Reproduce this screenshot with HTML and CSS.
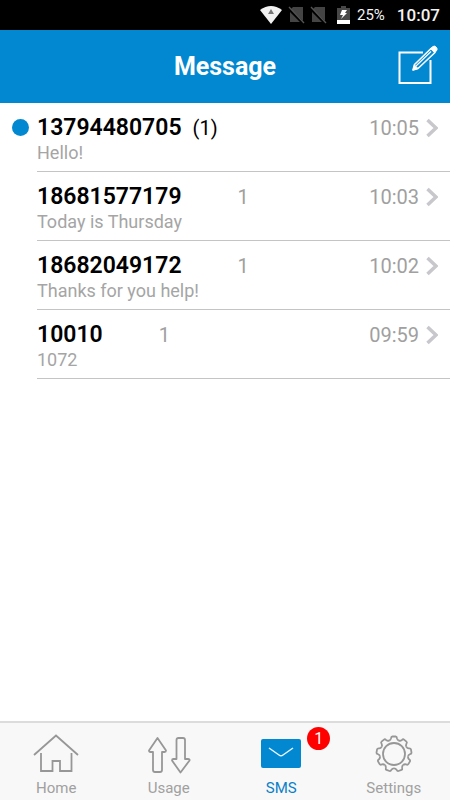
FILE: index.html
```html
<!DOCTYPE html>
<html lang="en">
<head>
<meta charset="utf-8">
<meta name="viewport" content="width=device-width, initial-scale=1">
<title>Message</title>
<link rel="stylesheet" href="styles.css">
</head>
<body>
<div class="status">
  <svg class="wifi" width="22" height="18" viewBox="0 0 22 18" aria-hidden="true"><path d="M0 4Q11-4 22 4L11 18Z" fill="#f2f2f2"/><path d="M11 3L14 8H8Z" fill="#777"/></svg>
  <svg class="sim" width="17" height="18" viewBox="0 0 17 18" aria-hidden="true"><path d="M5 1H15V16H2V4Z" fill="#444"/><path d="M0 2L15 17" stroke="#000" stroke-width="3"/><path d="M1 1L16 17" stroke="#555" stroke-width="1.3"/></svg>
  <svg class="sim" width="17" height="18" viewBox="0 0 17 18" aria-hidden="true"><path d="M5 1H15V16H2V4Z" fill="#444"/><path d="M0 2L15 17" stroke="#000" stroke-width="3"/><path d="M1 1L16 17" stroke="#555" stroke-width="1.3"/></svg>
  <svg class="battery" width="13" height="18" viewBox="0 0 13 18" aria-hidden="true"><path d="M4 0H9V2H13V14H0V2H4Z" fill="#484848"/><path d="M0 14H13V18H0Z" fill="#fff"/><path d="M5 4H10L8 7H10L4 13L6 9H3Z" fill="#fff"/></svg>
  <span class="charge">25%</span>
  <span class="clock">10:07</span>
</div>
<header class="header">
  <h1 class="title">Message</h1>
  <button class="compose" type="button" aria-label="New message">
    <svg width="42" height="42" viewBox="0 0 42 42" fill="none" stroke="#fff" aria-hidden="true">
      <path d="M27 8.500H3.500V39H34.500V16" stroke-width="2"/>
      <path d="M17 26L18.500 20.500L35 4.500L39 8.500L22 24.500Z" fill="#0288d1" stroke-width="1.600" stroke-linejoin="round"/>
      <path d="M20 22L35 7.500" stroke-width="1.200"/>
      <path d="M17 26L18.500 21L22 24.500Z" fill="#fff"/>
      <path d="M34.500 4.500L37 2.500Q38.500 1.500 40 3T41 6L39 8.500Z" fill="#fff"/>
    </svg>
  </button>
</header>
<main class="content">
  <ul class="list">
    <li><a class="row" href="#m1">
      <span class="dot"></span>
      <span class="line"><b class="number">13794480705</b><span class="unread">(1)</span><time class="time">10:05</time><svg class="chevron" width="12" height="20" viewBox="0 0 12 20" aria-hidden="true"><path d="M1.500 2L10 10L1.500 18"/></svg></span>
      <span class="preview">Hello!</span>
    </a></li>
    <li><a class="row" href="#m2">
      <span class="line"><b class="number">18681577179</b><span class="count">1</span><time class="time">10:03</time><svg class="chevron" width="12" height="20" viewBox="0 0 12 20" aria-hidden="true"><path d="M1.500 2L10 10L1.500 18"/></svg></span>
      <span class="preview">Today is Thursday</span>
    </a></li>
    <li><a class="row" href="#m3">
      <span class="line"><b class="number">18682049172</b><span class="count">1</span><time class="time">10:02</time><svg class="chevron" width="12" height="20" viewBox="0 0 12 20" aria-hidden="true"><path d="M1.500 2L10 10L1.500 18"/></svg></span>
      <span class="preview">Thanks for you help!</span>
    </a></li>
    <li><a class="row" href="#m4">
      <span class="line"><b class="number">10010</b><span class="count">1</span><time class="time">09:59</time><svg class="chevron" width="12" height="20" viewBox="0 0 12 20" aria-hidden="true"><path d="M1.500 2L10 10L1.500 18"/></svg></span>
      <span class="preview">1072</span>
    </a></li>
  </ul>
</main>
<nav class="tabs">
  <a class="tab" href="#home">
    <svg class="icon" width="46" height="40" viewBox="0 0 46 40" aria-hidden="true"><path d="M1 21L23 1.500L45 21M8 19V37H19.500V27H27V37H38.500V19"/></svg>
    Home
  </a>
  <a class="tab" href="#usage">
    <svg class="icon" width="46" height="40" viewBox="0 0 46 40" aria-hidden="true"><path stroke-linejoin="round" d="M11.500 4L20 16.500Q20 18 18.500 18H16V36Q16 38 14 38H9Q7 38 7 36V18H4.500Q3 18 3 16.500ZM34.500 38.500L26 26.500Q26 25 27.500 25H30.500V6Q30.500 4 32.500 4H37Q39 4 39 6V25H42Q44 25 43.500 26.500Z"/></svg>
    Usage
  </a>
  <a class="tab active" href="#sms" aria-current="page">
    <svg class="mail" width="46" height="40" viewBox="0 0 46 40" aria-hidden="true"><rect x="3" y="5" width="40" height="29" rx="2" fill="#0288d1"/><path d="M11 14L21 21Q23 22.500 25 21L35 14" fill="none" stroke="#e8f6ff" stroke-width="1.500"/></svg>
    SMS
    <span class="badge">1</span>
  </a>
  <a class="tab" href="#settings">
    <svg class="icon" width="46" height="40" viewBox="0 0 46 40" aria-hidden="true">
      <defs><path id="tooth" d="M-4.890-13.440C-3.600-13.900-3.200-14.600-3-15.600Q-2.800-17.500-1.600-17.500H1.600Q2.800-17.500 3-15.600C3.200-14.600 3.600-13.900 4.890-13.440"/></defs>
      <g transform="translate(23 20)">
        <use href="#tooth"/><use href="#tooth" transform="rotate(40)"/><use href="#tooth" transform="rotate(80)"/><use href="#tooth" transform="rotate(120)"/><use href="#tooth" transform="rotate(160)"/><use href="#tooth" transform="rotate(200)"/><use href="#tooth" transform="rotate(240)"/><use href="#tooth" transform="rotate(280)"/><use href="#tooth" transform="rotate(320)"/>
        <circle r="11"/>
      </g>
    </svg>
    Settings
  </a>
</nav>
</body>
</html>
```
FILE: styles.css
```css
* {
  box-sizing: border-box;
}

body {
  display: flex;
  flex-direction: column;
  min-height: 100vh;
  margin: 0;
  background: #fff;
  color: #000;
  font-family: Roboto, "Liberation Sans", sans-serif;
}

a {
  color: inherit;
  text-decoration: none;
}

svg {
  display: block;
  flex: none;
}

.status {
  display: flex;
  align-items: center;
  justify-content: flex-end;
  height: 30px;
  padding-right: 10px;
  background: #000;
  color: #f2f2f2;
}

.sim {
  margin-left: 5px;
}

.wifi + .sim {
  margin-left: 6px;
}

.battery {
  margin-left: 10px;
}

.charge {
  margin-left: 7px;
  font-size: 15px;
}

.clock {
  margin-left: 12px;
  font-size: 17px;
  font-weight: 500;
}

.header {
  display: grid;
  grid-template-columns: 1fr auto 1fr;
  align-items: center;
  height: 73px;
  padding: 0 12px;
  background: #0288d1;
  color: #fff;
}

.title {
  grid-column: 2;
  margin: 0;
  font-size: 25px;
  font-weight: 700;
}

.compose {
  justify-self: end;
  padding: 0 0 4px;
  border: 0;
  background: none;
}

.content {
  flex: 1;
}

.list {
  margin: 0;
  padding: 0 0 0 37px;
  list-style: none;
}

.row {
  position: relative;
  display: block;
  height: 69px;
  padding: 10px 12px 0 0;
  border-bottom: 1px solid #c4c4c4;
}

.dot {
  position: absolute;
  top: 16px;
  left: -25px;
  width: 17px;
  height: 17px;
  border-radius: 50%;
  background: #0288d1;
}

.line {
  display: flex;
  align-items: center;
  height: 30px;
  font-size: 20px;
}

.number {
  margin-bottom: 2px;
  font-size: 23px;
  font-weight: 600;
}

.unread {
  margin-left: 11px;
}

.count {
  margin-left: 56px;
  color: #a0a0a0;
}

.time {
  margin-left: auto;
  color: #a0a0a0;
}

.chevron {
  margin-left: 7px;
  fill: none;
  stroke: #c7c7cc;
  stroke-width: 3.5;
}

.preview {
  display: block;
  color: #a5a5a5;
  font-size: 18px;
  line-height: 20px;
}

.tabs {
  display: grid;
  grid-template-columns: repeat(4, 1fr);
  height: 79px;
  border-top: 2px solid #dcdcdc;
  background: #f8f8f8;
}

.tab {
  position: relative;
  display: flex;
  flex-direction: column;
  align-items: center;
  gap: 4px;
  padding-top: 11px;
  color: #a0a0a0;
  font-size: 15px;
  line-height: 20px;
}

.active {
  color: #0b7fc7;
}

.icon {
  fill: none;
  stroke: #979797;
  stroke-width: 1.8;
}

.badge {
  position: absolute;
  top: 4px;
  left: calc(50% + 26px);
  width: 23px;
  height: 23px;
  border-radius: 50%;
  background: #f00;
  color: #fff;
  font-size: 16px;
  line-height: 23px;
  text-align: center;
}
```
